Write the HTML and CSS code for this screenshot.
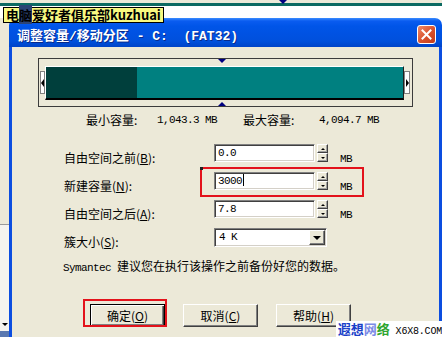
FILE: index.html
```html
<!DOCTYPE html>
<html lang="zh-CN">
<head>
    <meta charset="UTF-8">
    <meta name="viewport" content="width=device-width, initial-scale=1.0">
    <title>调整容量/移动分区</title>
    <link rel="stylesheet" href="styles.css">
</head>
<body>
    <div class="desktop">
        <!-- Window behind the dialog -->
        <div class="back-top">
            <span class="back-marker"></span>
        </div>

        <div class="main">
            <div class="back-left">
                <div class="back-left-pane"></div>
                <div class="back-left-list"><span class="back-arrow"></span></div>
                <div class="back-left-bar"></div>
            </div>

            <div class="dialog">
                <div class="titlebar">
                    <span class="title">调整容量<span class="title-latin">/</span>移动分区<span class="title-latin"> - C:  (FAT32)</span></span>
                    <button class="close-btn" aria-label="关闭">
                        <svg width="11" height="11" viewBox="0 0 11 11">
                            <path d="M1.5 1.5L9.5 9.5M9.5 1.5L1.5 9.5" stroke="#ffffff" stroke-width="2" stroke-linecap="square"/>
                        </svg>
                    </button>
                </div>

                <div class="dialog-body">
                    <!-- Partition bar -->
                    <div class="partition">
                        <span class="handle handle-left"></span>
                        <div class="bar">
                            <div class="bar-used"></div>
                            <div class="bar-free"></div>
                        </div>
                        <span class="handle handle-right"></span>
                        <span class="marker marker-top"></span>
                        <span class="marker marker-bottom"></span>
                    </div>

                    <div class="capacity">
                        <span>最小容量:</span>
                        <span class="num">1,043.3 MB</span>
                        <span>最大容量:</span>
                        <span class="num">4,094.7 MB</span>
                    </div>

                    <!-- Size fields -->
                    <div class="form">
                        <div class="field-row">
                            <label class="field-label">自由空间之前(<u>B</u>):</label>
                            <div class="field-input num">0.0</div>
                            <div class="spin">
                                <span class="spin-btn spin-up"></span>
                                <span class="spin-btn spin-down"></span>
                            </div>
                            <span class="unit num">MB</span>
                        </div>
                        <div class="field-row">
                            <label class="field-label">新建容量(<u>N</u>):</label>
                            <div class="field-input num">3000<span class="caret"></span></div>
                            <div class="spin">
                                <span class="spin-btn spin-up"></span>
                                <span class="spin-btn spin-down"></span>
                            </div>
                            <span class="unit num">MB</span>
                        </div>
                        <div class="field-row">
                            <label class="field-label">自由空间之后(<u>A</u>):</label>
                            <div class="field-input num">7.8</div>
                            <div class="spin">
                                <span class="spin-btn spin-up"></span>
                                <span class="spin-btn spin-down"></span>
                            </div>
                            <span class="unit num">MB</span>
                        </div>
                        <div class="field-row field-row-select">
                            <label class="field-label">簇大小(<u>S</u>):</label>
                            <div class="select">
                                <span class="select-value num">4 K</span>
                                <span class="select-btn"></span>
                            </div>
                        </div>
                    </div>

                    <p class="note"><span class="num">Symantec </span>建议您在执行该操作之前备份好您的数据。</p>

                    <div class="buttons">
                        <button class="btn btn-default">确定(<u>O</u>)</button>
                        <button class="btn">取消(<u>C</u>)</button>
                        <button class="btn">帮助(<u>H</u>)</button>
                    </div>

                    <!-- Red annotation boxes -->
                    <span class="mark mark-input"></span>
                    <span class="mark mark-ok"></span>
                </div>
            </div>
        </div>

        <div class="tooltip">电<span class="tooltip-hl">脑</span>爱好者俱乐部kuzhuai</div>

        <div class="watermark">
            <span class="wm-blue">遐想</span><span class="wm-violet">网</span><span class="wm-green">络</span><span class="wm-site"> X6X8.COM</span>
        </div>
    </div>
</body>
</html>
```

FILE: styles.css
```css
/* Base */
* {
    box-sizing: border-box;
    margin: 0;
    padding: 0;
}

body {
    font-family: "Noto Sans CJK SC", "Noto Sans", sans-serif;
    font-size: 12px;
    color: #000000;
    background: #ffffff;
}

.desktop {
    position: relative;
    width: 442px;
    height: 337px;
    overflow: hidden;
    display: flex;
    flex-direction: column;
}

.num {
    font-family: "Liberation Mono", monospace;
    font-size: 11px;
    letter-spacing: -0.6px;
}

/* Background window */
.back-top {
    position: relative;
    height: 18px;
    flex-shrink: 0;
    background: linear-gradient(to bottom, #ece9d8 0, #ece9d8 3px, #0b6a62 3px, #0b6a62 6px, #ffffff 6px);
}

.back-marker {
    position: absolute;
    left: 279px;
    top: 0;
    border-left: 4px solid transparent;
    border-right: 4px solid transparent;
    border-top: 4px solid #000080;
}

.main {
    display: flex;
    flex: 1;
    min-height: 0;
}

.back-left {
    width: 9px;
    flex-shrink: 0;
    display: flex;
    flex-direction: column;
}

.back-left-pane {
    height: 207px;
    background: #ece9d8;
    border-bottom: 1px solid #9a9a9a;
}

.back-left-list {
    flex: 1;
    background: #f5f4ef;
    display: flex;
    align-items: flex-end;
    justify-content: center;
    padding-bottom: 5px;
}

.back-arrow {
    border-left: 3px solid transparent;
    border-right: 3px solid transparent;
    border-top: 3px solid #000000;
}

.back-left-bar {
    height: 6px;
    background: #5a78b0;
}

/* Dialog */
.dialog {
    width: 433px;
    display: flex;
    flex-direction: column;
}

.titlebar {
    height: 29px;
    flex-shrink: 0;
    display: flex;
    align-items: center;
    justify-content: space-between;
    padding: 3px 6px 0 8px;
    border-radius: 7px 7px 0 0;
    background: linear-gradient(to bottom, #3a8cff 0, #0a5cf0 3px, #0055e8 8px, #0052e2 55%, #0050dc 80%, #0044c8 100%);
}

.title {
    color: #ffffff;
    font-weight: bold;
    font-size: 13px;
    white-space: pre;
    text-shadow: 1px 1px #0a2a8a;
}

.title-latin {
    font-family: "Liberation Mono", monospace;
}

.close-btn {
    width: 19px;
    height: 19px;
    display: flex;
    align-items: center;
    justify-content: center;
    border: 1px solid #ffffff;
    border-radius: 3px;
    background: linear-gradient(135deg, #ef8a68, #d8502c 55%, #c23c1a);
}

.dialog-body {
    position: relative;
    height: 300px;
    background: #ece9d8;
    border-left: 3px solid #0c4ee0;
    border-right: 3px solid #0c4ee0;
    padding-top: 11px;
}

/* Partition bar */
.partition {
    position: relative;
    width: 375px;
    height: 49px;
    margin-left: 26px;
    padding-left: 1px;
    border: 1px solid #3c3c3c;
    display: flex;
    align-items: center;
}

.handle {
    width: 5px;
    height: 23px;
    background: #ffffff;
    border: 1px solid #808080;
    display: flex;
    align-items: center;
    justify-content: center;
}

.handle-right {
    width: 6px;
}

.handle-left::before {
    content: "";
    border-top: 4px solid transparent;
    border-bottom: 4px solid transparent;
    border-right: 3px solid #000000;
}

.handle-right::before {
    content: "";
    border-top: 4px solid transparent;
    border-bottom: 4px solid transparent;
    border-left: 3px solid #000000;
}

.bar {
    width: 359px;
    height: 34px;
    display: flex;
    border-top: 1px solid #ffffff;
    border-left: 1px solid #ffffff;
    border-right: 1px solid #202020;
    border-bottom: 2px solid #000000;
}

.bar-used {
    width: 91px;
    background: #003f3c;
}

.bar-free {
    flex: 1;
    background: #008080;
}

.marker {
    position: absolute;
    left: 179px;
    border-left: 4px solid transparent;
    border-right: 4px solid transparent;
}

.marker-top {
    top: 0;
    border-top: 4px solid #000080;
}

.marker-bottom {
    bottom: 0;
    border-bottom: 4px solid #000080;
}

.capacity {
    display: grid;
    grid-template-columns: 71px 86px 76px auto;
    margin: 7px 0 0 74px;
    line-height: 12px;
}

/* Fields */
.form {
    display: flex;
    flex-direction: column;
    gap: 10px;
    margin: 18px 0 0 52px;
}

.field-row {
    display: flex;
    align-items: flex-start;
    height: 18px;
}

.field-row-select {
    height: 19px;
}

.field-label {
    width: 150px;
    padding-top: 8px;
    line-height: 12px;
}

.field-input {
    width: 101px;
    height: 18px;
    padding: 0 3px;
    line-height: 16px;
    background: #ffffff;
    border: 1px solid;
    border-color: #808080 #ffffff #ffffff #808080;
    box-shadow: inset 1px 1px #404040, inset -1px -1px #d4d0c8;
}

.caret {
    display: inline-block;
    width: 1px;
    height: 12px;
    margin-left: 1px;
    background: #000000;
    vertical-align: -2px;
}

.spin {
    width: 11px;
    height: 18px;
    margin-left: 2px;
    display: flex;
    flex-direction: column;
}

.spin-btn {
    flex: 1;
    display: flex;
    align-items: center;
    justify-content: center;
    background: #ece9d8;
    border: 1px solid;
    border-color: #ffffff #404040 #404040 #ffffff;
    box-shadow: inset -1px -1px #a0a0a0;
}

.spin-up::before {
    content: "";
    border-left: 2px solid transparent;
    border-right: 2px solid transparent;
    border-bottom: 2px solid #000000;
}

.spin-down::before {
    content: "";
    border-left: 2px solid transparent;
    border-right: 2px solid transparent;
    border-top: 2px solid #000000;
}

.unit {
    margin-left: 12px;
    padding-top: 9px;
    line-height: 12px;
}

.select {
    width: 113px;
    height: 19px;
    display: flex;
    padding: 1px 1px 1px 4px;
    background: #ffffff;
    border: 1px solid;
    border-color: #808080 #ffffff #ffffff #808080;
    box-shadow: inset 1px 1px #404040, inset -1px -1px #d4d0c8;
}

.select-value {
    flex: 1;
    line-height: 15px;
}

.select-btn {
    width: 16px;
    display: flex;
    align-items: center;
    justify-content: center;
    background: #ece9d8;
    border: 1px solid;
    border-color: #ffffff #404040 #404040 #ffffff;
    box-shadow: inset -1px -1px #808080;
}

.select-btn::before {
    content: "";
    border-left: 4px solid transparent;
    border-right: 4px solid transparent;
    border-top: 4px solid #000000;
}

.note {
    margin: 13px 0 0 51px;
    line-height: 12px;
}

/* Buttons */
.buttons {
    display: flex;
    gap: 18px;
    margin: 30px 0 0 78px;
}

.btn {
    width: 75px;
    height: 23px;
    font-family: inherit;
    font-size: 12px;
    color: #000000;
    background: #ece9d8;
    border: 1px solid;
    border-color: #ffffff #404040 #404040 #ffffff;
    box-shadow: inset -1px -1px #808080;
}

.btn-default {
    border: 1px solid #000000;
    box-shadow: inset 1px 1px #ffffff, inset -1px -1px #404040, inset -2px -2px #808080;
}

/* Annotations over the screenshot */
.mark {
    position: absolute;
    border: 2px solid #e3121b;
}

.mark-input {
    left: 188px;
    top: 120px;
    width: 164px;
    height: 30px;
}

.mark-input::before {
    content: "";
    position: absolute;
    left: -2px;
    top: -2px;
    width: 3px;
    height: 3px;
    background: #202020;
}

.mark-ok {
    left: 71px;
    top: 252px;
    width: 84px;
    height: 28px;
}

.tooltip {
    position: absolute;
    left: 3px;
    top: 7px;
    height: 16px;
    padding: 0 2px;
    font-size: 13px;
    font-weight: bold;
    line-height: 14px;
    background: #f8f880;
    border: 1px solid #000000;
}

.tooltip-hl {
    background: #2c4474;
}

.watermark {
    position: absolute;
    right: 0;
    bottom: 0;
    height: 16px;
    padding-left: 2px;
    line-height: 16px;
    font-size: 13px;
    font-weight: bold;
    background: #ffffff;
}

.wm-blue {
    color: #1a3fc8;
}

.wm-violet {
    color: #7c8ae6;
}

.wm-green {
    color: #2fa52f;
}

.wm-site {
    font-family: "Liberation Mono", monospace;
    font-size: 10px;
    font-weight: normal;
    letter-spacing: -0.2px;
}
```
